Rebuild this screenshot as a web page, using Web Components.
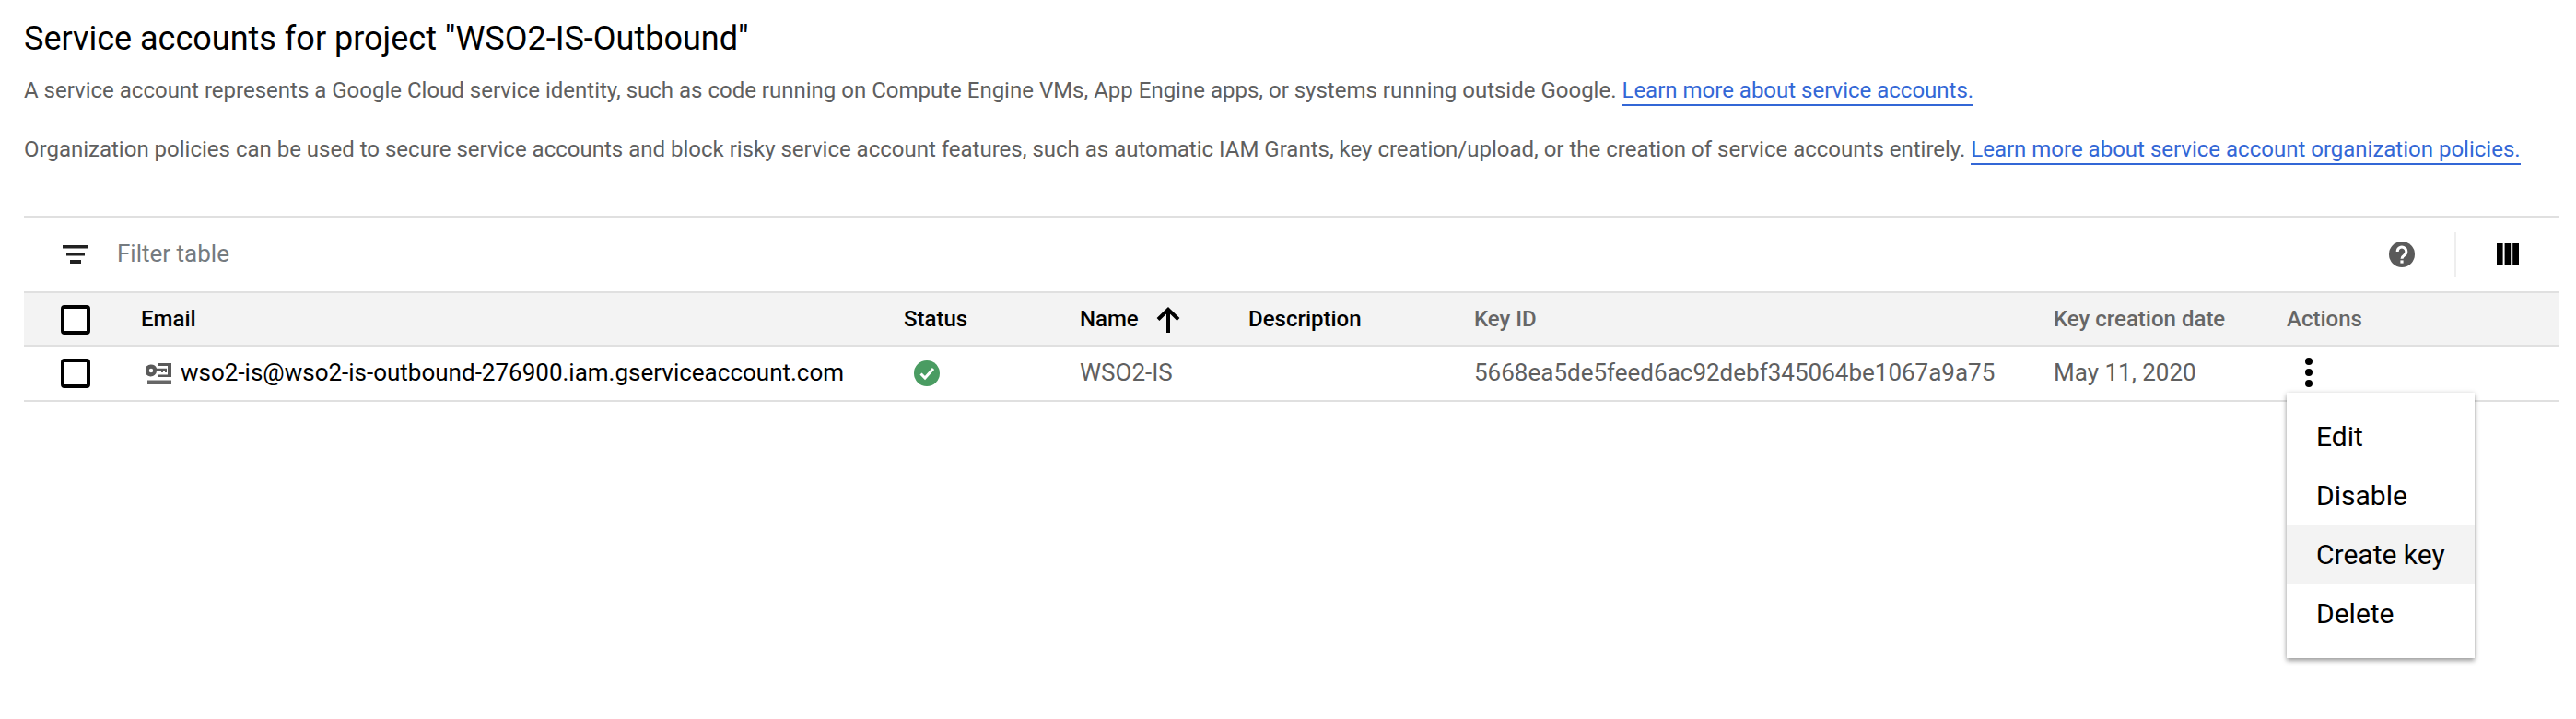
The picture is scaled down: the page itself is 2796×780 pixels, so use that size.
<!DOCTYPE html>
<html><head><meta charset="utf-8"><title>Service accounts</title>
<style>
html,body{margin:0;background:#fff}
body{font-family:Roboto,"Liberation Sans",sans-serif;--cols:127px 828px 191px 183px 245px 629px 253px 1fr}
</style></head><body>
<sa-page>
  <sa-intro>
    <span slot="title">Service accounts for project "WSO2-IS-Outbound"</span>
    <p slot="text">A service account represents a Google Cloud service identity, such as code running on Compute Engine VMs, App Engine apps, or systems running outside Google. <sa-link>Learn more about service accounts.</sa-link></p>
    <p slot="text">Organization policies can be used to secure service accounts and block risky service account features, such as automatic IAM Grants, key creation/upload, or the creation of service accounts entirely. <sa-link>Learn more about service account organization policies.</sa-link></p>
  </sa-intro>
  <sa-toolbar></sa-toolbar>
  <sa-table-head></sa-table-head>
  <sa-table-row></sa-table-row>
</sa-page>
<script>
function def(name, html){
  customElements.define(name, class extends HTMLElement{
    constructor(){super();this.attachShadow({mode:'open'}).innerHTML=html;}
  });
}
def('sa-page',`<style>:host{display:block;padding:0 18px 0 26px;height:780px;box-sizing:border-box;overflow:hidden}</style><slot></slot>`);
def('sa-intro',`<style>
:host{display:block;height:234px;padding-top:20px;box-sizing:border-box}
.t{font-size:36px;line-height:44px;color:#000;font-weight:400}
::slotted(p){margin:0;font-size:24px;line-height:32px;color:#5f5f5f;white-space:nowrap}
.b{display:flex;flex-direction:column;gap:32px;margin-top:18px}
</style><div class="t"><slot name="title"></slot></div><div class="b"><slot name="text"></slot></div>`);
def('sa-link',`<style>:host{display:inline;color:#3367d6;border-bottom:2px solid #3367d6;padding-bottom:1px}</style><slot></slot>`);
def('sa-checkbox',`<style>:host{display:block;width:32px;height:32px;box-sizing:border-box;border:4px solid #000;border-radius:4px;background:#fff}</style>`);
def('sa-toolbar',`<style>
:host{display:flex;align-items:center;height:80px;border-top:2px solid #e0e0e0;color:#757b80;font-size:26px}
.f{display:block;margin-left:42px;margin-right:31px}
.s{flex:1}
.h{display:block;margin-right:43px}
.d{width:2px;height:48px;background:#eee;margin-right:44px}
.c{display:block;margin-right:44px}
.l{position:relative;top:-1px}
</style>
<svg class="f" width="28" height="20" viewBox="0 0 28 20"><path fill="#212121" d="M0 0h28v3.600H0zM4 8h20v3.400H4zM8 16h12v4H8z"/></svg>
<span class="l">Filter table</span><span class="s"></span>
<svg class="h" width="28" height="28" viewBox="0 0 28 28"><circle cx="14" cy="14" r="14" fill="#5a5a5a"/><path fill="none" stroke="#fff" stroke-width="3" d="M9.200 11a4.800 4.800 0 1 1 7.600 3.800c-1.700 1.200-2.800 2-2.800 4"/><rect x="12.400" y="20.400" width="3.200" height="3.200" fill="#fff"/></svg>
<span class="d"></span>
<svg class="c" width="24" height="24" viewBox="0 0 24 24"><path d="M0 0h6.600v24H0zM8.600 0h6.600v24H8.600zM17.200 0H24v24h-6.800z"/></svg>`);
def('sa-table-head',`<style>
:host{display:grid;grid-template-columns:var(--cols);align-items:center;height:56px;background:#f3f3f3;border-top:2px solid #e0e0e0;border-bottom:2px solid #e0e0e0;font-size:24px;font-weight:500;color:#000}
.cb{padding-left:40px}
.g{color:#666}
.n{display:flex;align-items:center;gap:19px}
svg{margin-top:2px}
sa-checkbox{margin-top:2px}
</style>
<div class="cb"><sa-checkbox></sa-checkbox></div><div>Email</div><div>Status</div>
<div class="n">Name<svg width="26" height="28" viewBox="0 0 26 28"><path fill="none" stroke="#000" stroke-width="4" d="M13 28V3.500M2 13.500 13 2.800l11 10.700"/></svg></div>
<div>Description</div><div class="g">Key ID</div><div class="g">Key creation date</div><div class="g">Actions</div>`);
def('sa-table-row',`<style>
:host{display:grid;grid-template-columns:var(--cols);align-items:center;height:58px;border-bottom:2px solid #e0e0e0;font-size:26px;color:#5f5f5f}
.cb{padding-left:40px}
.e{display:flex;align-items:center;gap:10px;color:#000;padding-left:5px}
.st{padding-left:11px;display:flex}
.a{position:relative;height:100%;display:flex;align-items:center}
.k{display:block;margin:-2px 0 0 16px}
.t{position:relative;top:-1px}
sa-menu{position:absolute;left:0;top:50px}
</style>
<div class="cb"><sa-checkbox></sa-checkbox></div>
<div class="e"><svg width="28" height="23" viewBox="0 0 28 23"><path fill="#5a5a5a" fill-rule="evenodd" d="M6 1.500a6.500 6.500 0 0 1 6.100 4.200H23v4.300h-2V8.300h-2V10h-2V8.300h-4.900A6.500 6.500 0 1 1 6 1.500zm0 4.300a2.200 2.200 0 1 0 0 4.400 2.200 2.200 0 0 0 0-4.400z"/><path fill="#5a5a5a" d="M14 0h14v15H14v-2.500h10V3H14z"/><path fill="#666" d="M2 18.500h26V23H2z"/></svg><span class="t">wso2-is@wso2-is-outbound-276900.iam.gserviceaccount.com</span></div>
<div class="st"><svg width="28" height="28" viewBox="0 0 28 28"><circle cx="14" cy="14" r="14" fill="#4a9c62"/><path fill="none" stroke="#fff" stroke-width="3" d="M7.500 14.500l4.500 4.500 9-10"/></svg></div>
<div class="t">WSO2-IS</div><div></div>
<div class="t">5668ea5de5feed6ac92debf345064be1067a9a75</div>
<div class="t">May 11, 2020</div>
<div class="a"><svg class="k" width="16" height="32" viewBox="0 0 16 32"><circle cx="8" cy="4" r="4"/><circle cx="8" cy="16" r="4"/><circle cx="8" cy="28" r="4"/></svg>
<sa-menu><sa-menu-item>Edit</sa-menu-item><sa-menu-item>Disable</sa-menu-item><sa-menu-item active>Create key</sa-menu-item><sa-menu-item>Delete</sa-menu-item></sa-menu></div>`);
def('sa-menu',`<style>:host{display:block;width:204px;padding:16px 0;background:#fff;box-shadow:0 3px 5px rgba(0,0,0,.35),0 0 6px rgba(0,0,0,.1)}</style><slot></slot>`);
def('sa-menu-item',`<style>:host{display:flex;align-items:center;height:64px;padding:0 0 2px 32px;box-sizing:border-box;font-size:30px;color:#000}:host([active]){background:#f3f3f3}</style><slot></slot>`);
</script>
</body></html>
